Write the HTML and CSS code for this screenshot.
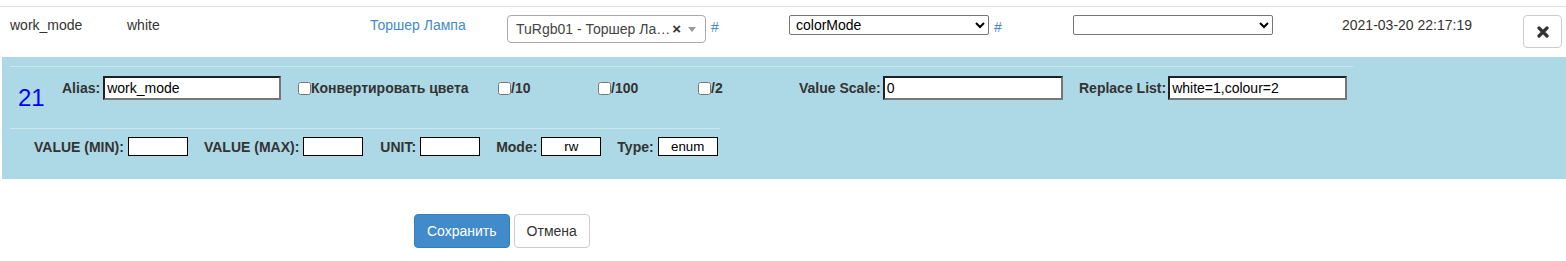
FILE: index.html
```html
<!DOCTYPE html>
<html lang="en">

<head>
    <meta charset="UTF-8">
    <meta name="viewport" content="width=device-width, initial-scale=1.0">
    <title>Device Properties</title>
    <link rel="stylesheet" href="styles.css">
</head>

<body>
    <!-- Property row -->
    <div class="prop-row">
        <div class="cell c-name">work_mode</div>
        <div class="cell c-value">white</div>
        <div class="cell c-device"><a href="#">Торшер Лампа</a></div>
        <div class="cell c-link">
            <span class="select2">
                <span class="select2-text">TuRgb01 - Торшер Ла…</span>
                <span class="select2-clear">×</span>
                <span class="select2-arrow"></span>
            </span>
            <a href="#" class="hash">#</a>
        </div>
        <div class="cell c-prop">
            <select class="native-select">
                <option>colorMode</option>
            </select>
            <a href="#" class="hash">#</a>
        </div>
        <div class="cell c-method">
            <select class="native-select">
                <option></option>
            </select>
        </div>
        <div class="cell c-updated">2021-03-20 22:17:19</div>
        <div class="cell c-actions">
            <button class="btn btn-default btn-delete" title="Delete">
                <svg width="12" height="12" viewBox="0 0 12 12">
                    <path d="M2 2 L10 10 M10 2 L2 10" stroke="#333" stroke-width="3.2" stroke-linecap="round" />
                </svg>
            </button>
        </div>
    </div>

    <!-- Edit panel -->
    <div class="edit-panel">
        <div class="edit-row edit-main">
            <div class="prop-id">21</div>
            <div class="field f-alias">
                <label>Alias:</label>
                <input type="text" class="inset-input w-alias" value="work_mode">
            </div>
            <div class="field f-convert">
                <label><input type="checkbox">Конвертировать цвета</label>
            </div>
            <div class="field f-div">
                <label><input type="checkbox">/10</label>
            </div>
            <div class="field f-div">
                <label><input type="checkbox">/100</label>
            </div>
            <div class="field f-div2">
                <label><input type="checkbox">/2</label>
            </div>
            <div class="field f-scale">
                <label>Value Scale:</label>
                <input type="text" class="inset-input w-scale" value="0">
            </div>
            <div class="field f-replace">
                <label>Replace List:</label>
                <input type="text" class="inset-input w-replace" value="white=1,colour=2">
            </div>
        </div>

        <div class="edit-row edit-limits">
            <div class="limit">
                <label>VALUE (MIN):</label>
                <input type="text" class="small-input">
            </div>
            <div class="limit">
                <label>VALUE (MAX):</label>
                <input type="text" class="small-input">
            </div>
            <div class="limit">
                <label>UNIT:</label>
                <input type="text" class="small-input">
            </div>
            <div class="limit">
                <label>Mode:</label>
                <input type="text" class="small-input centered" value="rw">
            </div>
            <div class="limit">
                <label>Type:</label>
                <input type="text" class="small-input centered" value="enum">
            </div>
        </div>
    </div>

    <!-- Form actions -->
    <div class="form-actions">
        <button class="btn btn-primary">Сохранить</button>
        <button class="btn btn-default">Отмена</button>
    </div>
</body>
</html>
```

FILE: styles.css
```css
body {
    margin: 0;
    font-family: "Liberation Sans", Arial, sans-serif;
    font-size: 14px;
    line-height: 20px;
    color: #333;
    background: #fff;
}

a {
    color: #428bca;
    text-decoration: none;
}

/* Property row */

.prop-row {
    display: flex;
    margin-top: 6px;
    border-top: 1px solid #ddd;
    height: 50px;
}

.cell {
    box-sizing: border-box;
    padding: 8px;
    flex: none;
}

.c-name {
    width: 119px;
    padding-left: 10px;
}

.c-value {
    width: 243px;
}

.c-device {
    width: 137px;
}

.c-link {
    width: 282px;
    display: flex;
    align-items: flex-start;
}

.c-prop {
    width: 284px;
    display: flex;
    align-items: flex-start;
}

.c-method {
    width: 269px;
}

.c-updated {
    width: 181px;
}

.c-actions {
    flex: 1;
}

.hash {
    margin-left: 5px;
    line-height: 24px;
}

.select2 {
    box-sizing: border-box;
    display: flex;
    align-items: center;
    width: 199px;
    height: 28px;
    border: 1px solid #aaa;
    border-radius: 4px;
    padding-left: 8px;
    color: #444;
}

.select2-text {
    flex: 1;
    white-space: nowrap;
}

.select2-clear {
    font-weight: bold;
    font-size: 15px;
    color: #333;
    margin-right: 7px;
}

.select2-arrow {
    width: 0;
    height: 0;
    border-left: 4px solid transparent;
    border-right: 4px solid transparent;
    border-top: 5px solid #999;
    margin-right: 9px;
}

.native-select {
    box-sizing: border-box;
    width: 200px;
    height: 20px;
    font-family: "Liberation Sans", Arial, sans-serif;
    font-size: 14px;
    color: #000;
    background: #fff;
    border: 1px solid #767676;
    border-radius: 2px;
    padding: 0 2px;
    margin: 0;
}

/* Buttons */

.btn {
    box-sizing: border-box;
    font-family: "Liberation Sans", Arial, sans-serif;
    font-size: 14px;
    line-height: 20px;
    padding: 6px 12px;
    border: 1px solid #ccc;
    border-radius: 4px;
    background: #fff;
    color: #333;
    cursor: pointer;
}

.btn-primary {
    background: #428bca;
    border-color: #357ebd;
    color: #fff;
}

.btn-primary:hover {
    background: #3276b1;
}

.btn-delete {
    width: 39px;
    height: 33px;
    padding: 0;
    display: flex;
    align-items: center;
    justify-content: center;
}

/* Edit panel */

.edit-panel {
    box-sizing: border-box;
    margin-left: 2px;
    height: 122px;
    padding: 9px 0 0 8px;
    background: #add8e6;
}

.edit-row {
    box-sizing: border-box;
    display: flex;
    border-top: 1px solid #cfe6ee;
}

.edit-main {
    width: 1343px;
    height: 62px;
    padding-top: 9px;
}

.prop-id {
    box-sizing: border-box;
    width: 44px;
    padding-left: 8px;
    align-self: center;
    font-size: 24px;
    line-height: 28px;
    color: #0000ff;
    margin-top: -9px;
}

.field {
    box-sizing: border-box;
    display: flex;
    align-items: center;
    gap: 4px;
    height: 24px;
    padding: 0 8px;
    font-weight: bold;
    flex: none;
}

.field label {
    display: flex;
    align-items: center;
    white-space: nowrap;
}

.field input[type="checkbox"] {
    width: 13px;
    height: 13px;
    margin: 0;
}

.f-alias {
    width: 236px;
}

.f-convert {
    width: 200px;
}

.f-div {
    width: 100px;
}

.f-div2 {
    width: 101px;
}

.f-scale {
    width: 280px;
}

.f-replace {
    width: 282px;
}

.inset-input {
    box-sizing: border-box;
    flex: none;
    height: 24px;
    padding: 1px 2px;
    border: 2px inset #767676;
    font-family: "Liberation Sans", Arial, sans-serif;
    font-size: 14px;
    color: #000;
    background: #fff;
}

.w-alias {
    width: 178px;
    margin-left: -1px;
}

.w-scale {
    width: 180px;
    margin-left: -2px;
}

.w-replace {
    width: 179px;
    margin-left: -2px;
}

.edit-limits {
    width: 710px;
    height: 49px;
    padding: 8px 0 0 24px;
}

.limit {
    display: flex;
    align-items: center;
    gap: 4px;
    flex: none;
    height: 19px;
    margin-right: 16px;
    font-weight: bold;
    white-space: nowrap;
}

.limit:nth-child(2) {
    margin-right: 17px;
}

.small-input {
    box-sizing: border-box;
    flex: none;
    width: 60px;
    height: 19px;
    padding: 0 2px;
    border: 1px solid #000;
    font-family: "Liberation Sans", Arial, sans-serif;
    font-size: 13.33px;
    color: #000;
    background: #fff;
}

.small-input.centered {
    text-align: center;
}

/* Form actions */

.form-actions {
    display: flex;
    gap: 4px;
    padding: 35px 0 0 414px;
}
```
